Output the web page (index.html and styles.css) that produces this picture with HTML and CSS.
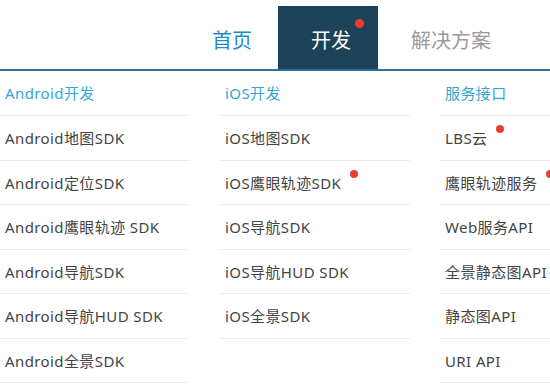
FILE: index.html
```html
<!DOCTYPE html>
<html lang="zh-CN">
<head>
<meta charset="utf-8">
<title>开发</title>
<link rel="stylesheet" href="styles.css">
</head>
<body>
<div class="page">
  <nav class="tabs">
    <a class="tab tab-home">首页</a>
    <a class="tab tab-active">开发<span class="dot tab-dot"></span></a>
    <a class="tab tab-plain">解决方案</a>
  </nav>
  <div class="menu">
    <ul class="col">
      <li class="head">Android开发</li>
      <li>Android地图SDK</li>
      <li>Android定位SDK</li>
      <li>Android鹰眼轨迹 SDK</li>
      <li>Android导航SDK</li>
      <li>Android导航HUD SDK</li>
      <li>Android全景SDK</li>
    </ul>
    <ul class="col">
      <li class="head">iOS开发</li>
      <li>iOS地图SDK</li>
      <li><span class="label">iOS鹰眼轨迹SDK<span class="dot item-dot"></span></span></li>
      <li>iOS导航SDK</li>
      <li>iOS导航HUD SDK</li>
      <li>iOS全景SDK</li>
    </ul>
    <ul class="col col-last">
      <li class="head">服务接口</li>
      <li><span class="label">LBS云<span class="dot item-dot"></span></span></li>
      <li><span class="label">鹰眼轨迹服务<span class="dot item-dot"></span></span></li>
      <li>Web服务API</li>
      <li>全景静态图API</li>
      <li>静态图API</li>
      <li>URI API</li>
    </ul>
  </div>
</div>
</body>
</html>
```

FILE: styles.css
```css
* { box-sizing: border-box; }
html, body { margin: 0; padding: 0; background: #fff; overflow: hidden; }
body {
  font-family: "Noto Sans", "Noto Sans CJK SC", sans-serif;
  width: 550px;
  height: 385px;
}
.page { width: 550px; height: 385px; overflow: hidden; }
.tabs {
  display: flex;
  padding: 6px 0 0 185px;
  height: 71px;
  border-bottom: 2px solid #2d7096;
}
.tab {
  position: relative;
  display: flex;
  align-items: center;
  height: 63px;
  padding-top: 3px;
  font-size: 20px;
  font-family: "Noto Sans CJK SC", sans-serif;
  text-decoration: none;
  color: #999;
}
.tab-home { color: #1e8ac7; width: 93px; padding-left: 27px; }
.tab-active { background: #1e4257; color: #fff; width: 100px; padding-left: 33px; }
.tab-plain { color: #9a9a9a; padding-left: 33px; }
.dot {
  position: absolute;
  display: block;
  border-radius: 50%;
  background: #ec3c32;
}
.tab-dot { width: 9px; height: 9px; top: 13px; right: 14px; }
.menu {
  display: flex;
  gap: 30px;
}
.col {
  list-style: none;
  margin: 0;
  padding: 0;
  width: 190px;
  flex: none;
}
.col-last { width: 140px; }
.col li {
  height: 44.5px;
  line-height: 44px;
  border-bottom: 1px solid #ececec;
  padding-left: 5px;
  font-size: 15px;
  letter-spacing: 0.4px;
  color: #444;
  white-space: nowrap;
}
.col li.head { color: #33a6d6; height: 45px; }
.label { position: relative; }
.item-dot { width: 8px; height: 8px; top: -3px; right: -17px; }
```
